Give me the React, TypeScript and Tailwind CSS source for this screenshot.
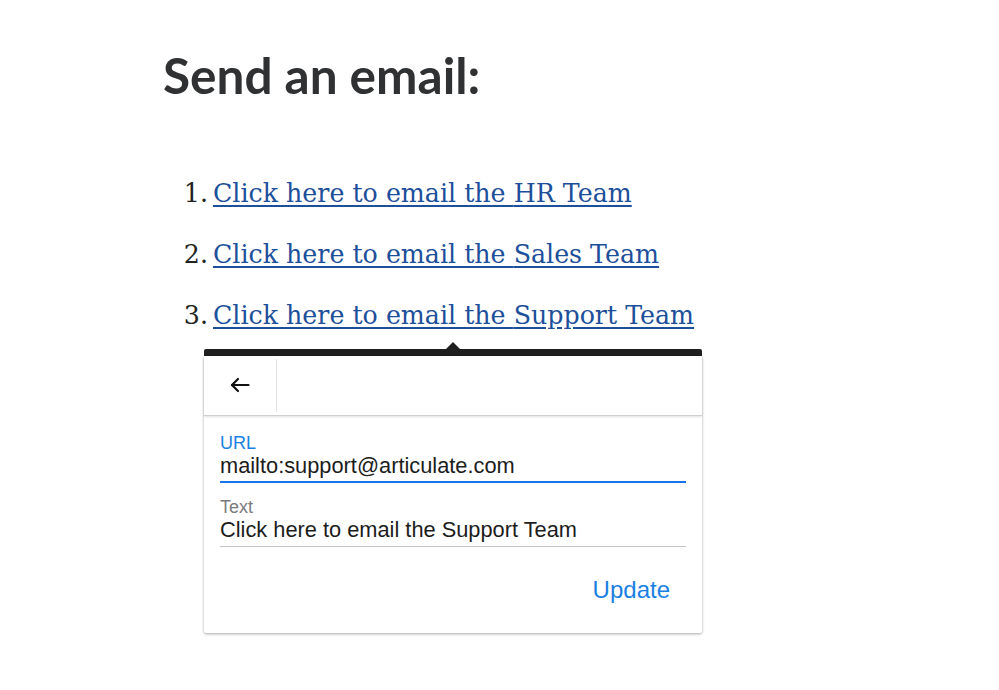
import { ReactNode } from 'react';

const teams = ['HR Team', 'Sales Team', 'Support Team'];

function BackArrow() {
  return (
    <svg width="20" height="16" viewBox="0 0 20 16" fill="none" stroke="#111" strokeWidth="2.2" strokeLinecap="round" strokeLinejoin="round">
      <path d="M18.5 8H2" />
      <path d="M8 2L2 8l6 6" />
    </svg>
  );
}

function Field({ label, value, active }: { label: string; value: ReactNode; active?: boolean }) {
  return (
    <div className={active ? 'border-b-2 border-[#1a73e8] pb-[2px]' : 'border-b border-[#c4c4c4] pb-[3px]'}>
      <div className={`text-[18px] leading-[20px] ${active ? 'text-[#1a7fe2]' : 'text-[#7b7b7b]'}`}>{label}</div>
      <div className="text-[21.8px] leading-[26px] text-[#1c1c1c]">{value}</div>
    </div>
  );
}

export default function App() {
  return (
    <div className="w-[999px] h-[690px] bg-white overflow-hidden">
      <div className="pl-[163px] pt-[51px]">
        <h1 className="text-[49.5px] leading-none font-bold text-[#2f3133] font-['Lato',sans-serif]">
          Send an email:
        </h1>

        <ol className="mt-[62px] font-['DejaVu_Serif',serif] text-[25.3px] leading-[61px]">
          {teams.map((team, i) => (
            <li key={team} className="flex">
              <span className="w-[50px] pr-[5px] text-right text-[#222]">{i + 1}.</span>
              <a href="#" className="text-[#1d4f9a] underline underline-offset-[3px] decoration-[1.5px]">
                Click here to email the {team}
              </a>
            </li>
          ))}
        </ol>

        {/* Link editor popover */}
        <div className="relative ml-[41px] mt-[3px] w-[498px] font-['Liberation_Sans',Arial,sans-serif]">
          <div className="absolute left-[242px] -top-[7px] w-0 h-0 border-l-[7px] border-r-[7px] border-b-[7px] border-l-transparent border-r-transparent border-b-[#1f1f1f]" />
          <div className="h-[7px] bg-[#1f1f1f] rounded-t-[2px]" />
          <div className="bg-white rounded-b-[2px] shadow-[0_1px_3px_rgba(0,0,0,0.35)]">
            <div className="flex h-[60px] border-b border-[#cfcfcf] shadow-[0_1px_2px_rgba(0,0,0,0.12)]">
              <button className="w-[72px] flex items-center justify-center">
                <BackArrow />
              </button>
              <div className="w-px my-[3px] bg-[#e6e6e6]" />
            </div>
            <div className="px-4 pt-[17px] pb-[29px]">
              <Field label="URL" value="mailto:support@articulate.com" active />
              <div className="mt-[14px]">
                <Field label="Text" value="Click here to email the Support Team" />
              </div>
              <div className="mt-[29px] flex justify-end pr-[16px]">
                <button className="text-[24px] leading-[28px] text-[#1a7fe2]">Update</button>
              </div>
            </div>
          </div>
        </div>
      </div>
    </div>
  );
}
